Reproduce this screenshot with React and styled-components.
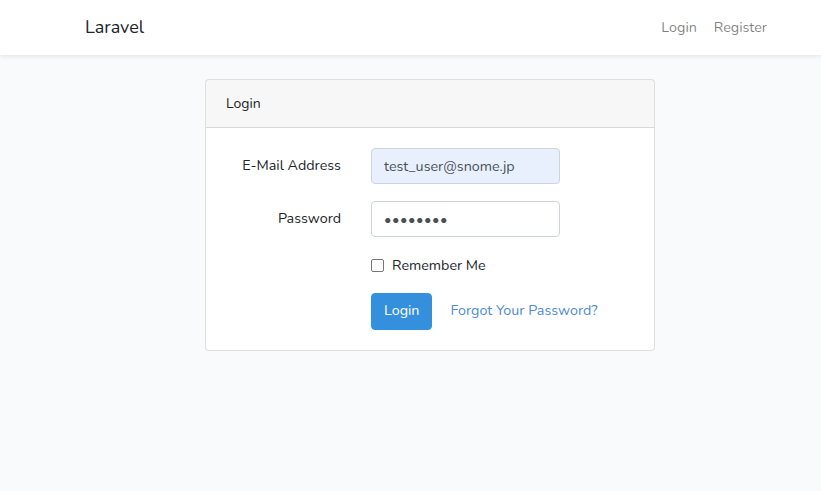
import React from "react";
import styled, { createGlobalStyle } from "styled-components";

const Global = createGlobalStyle`
  * { box-sizing: border-box; }
  html, body { margin: 0; padding: 0; }
  body {
    background: #f8fafc;
    font-family: Nunito, Lato, "Noto Sans", sans-serif;
    font-size: 14px;
    line-height: 1.6;
    color: #212529;
  }
`;

const Navbar = styled.nav`
  background: #fff;
  box-shadow: 0 2px 4px rgba(0, 0, 0, 0.075);
  padding: 8px 0;
`;

const Container = styled.div`
  width: 720px;
  margin-left: 70px;
  padding: 0 15px;
  display: flex;
  align-items: center;
  justify-content: ${(p) => (p.$between ? "space-between" : "center")};
`;

const Brand = styled.a`
  font-size: 18px;
  color: #212529;
  padding: 5px 0;
  line-height: 29px;
  text-decoration: none;
`;

const NavLinks = styled.div`
  display: flex;
  gap: 1px;
`;

const NavLink = styled.a`
  color: rgba(0, 0, 0, 0.5);
  padding: 8px;
  font-size: 14.3px;
  line-height: 22px;
  text-decoration: none;
`;

const Main = styled.main`
  padding: 24px 0;
`;

const Card = styled.div`
  width: 450px;
  background: #fff;
  border: 1px solid rgba(0, 0, 0, 0.125);
  border-radius: 4px;
`;

const CardHeader = styled.div`
  background: rgba(0, 0, 0, 0.03);
  border-bottom: 1px solid rgba(0, 0, 0, 0.125);
  padding: 12px 20px;
  line-height: 23px;
`;

const CardBody = styled.div`
  padding: 20px;
`;

const Row = styled.div`
  display: grid;
  grid-template-columns: 115px 189px;
  column-gap: 30px;
  align-items: center;
  margin-bottom: ${(p) => p.$mb ?? 16}px;
`;

const Label = styled.label`
  text-align: right;
  padding: 7px 0;
  font-size: 14.3px;
`;

const Input = styled.input`
  width: 189px;
  height: 36px;
  padding: 6px 12px;
  font: inherit;
  font-size: 14.3px;
  color: #495057;
  background: ${(p) => (p.$filled ? "#e8f0fe" : "#fff")};
  border: 1px solid #ced4da;
  border-radius: 4px;
  outline: none;
  letter-spacing: ${(p) => (p.type === "password" ? "0.5px" : "normal")};
`;

const Check = styled.label`
  grid-column: 2;
  display: flex;
  align-items: center;
  gap: 8px;
  padding-top: 1px;
  font-size: 14.3px;
  line-height: 22.4px;
  margin: 0;
`;

const Box = styled.span`
  width: 13px;
  height: 13px;
  border: 1px solid #767676;
  border-radius: 2px;
  background: #fff;
`;

const Actions = styled.div`
  grid-column: 2;
  display: flex;
  align-items: center;
  gap: 5px;
  white-space: nowrap;
`;

const Button = styled.button`
  font: inherit;
  font-size: 14.3px;
  line-height: 22.4px;
  padding: 6px 12px;
  border-radius: 4px;
  border: 1px solid ${(p) => (p.$link ? "transparent" : "#3490dc")};
  background: ${(p) => (p.$link ? "transparent" : "#3490dc")};
  color: ${(p) => (p.$link ? "#4f8bd2" : "#fff")};
  cursor: pointer;
`;

export default function App() {
  return (
    <>
      <Global />
      <Navbar>
        <Container $between>
          <Brand href="#">Laravel</Brand>
          <NavLinks>
            <NavLink href="#">Login</NavLink>
            <NavLink href="#">Register</NavLink>
          </NavLinks>
        </Container>
      </Navbar>
      <Main>
        <Container>
          <Card>
            <CardHeader>Login</CardHeader>
            <CardBody>
              <Row>
                <Label>E-Mail Address</Label>
                <Input $filled defaultValue="test_user@snome.jp" />
              </Row>
              <Row>
                <Label>Password</Label>
                <Input type="password" defaultValue="password" />
              </Row>
              <Row>
                <Check>
                  <Box />
                  Remember Me
                </Check>
              </Row>
              <Row $mb={0}>
                <Actions>
                  <Button>Login</Button>
                  <Button $link>Forgot Your Password?</Button>
                </Actions>
              </Row>
            </CardBody>
          </Card>
        </Container>
      </Main>
    </>
  );
}
